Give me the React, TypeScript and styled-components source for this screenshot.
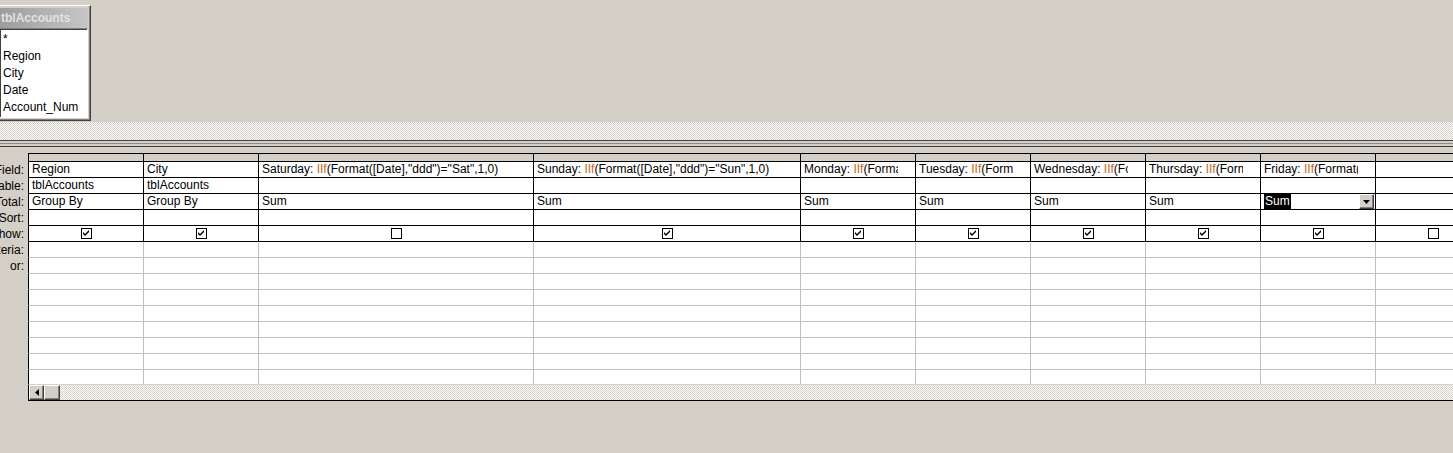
import styled, { createGlobalStyle } from "styled-components";

type Col = {
  w: number;
  field?: string;
  day?: string;
  abbr?: string;
  table?: string;
  total?: string;
  show?: boolean;
  active?: boolean;
};

const cols: Col[] = [
  { w: 115, field: "Region", table: "tblAccounts", total: "Group By", show: true },
  { w: 115, field: "City", table: "tblAccounts", total: "Group By", show: true },
  { w: 275, day: "Saturday", abbr: "Sat", total: "Sum", show: false },
  { w: 267, day: "Sunday", abbr: "Sun", total: "Sum", show: true },
  { w: 115, day: "Monday", abbr: "Mon", total: "Sum", show: true },
  { w: 115, day: "Tuesday", abbr: "Tue", total: "Sum", show: true },
  { w: 115, day: "Wednesday", abbr: "Wed", total: "Sum", show: true },
  { w: 115, day: "Thursday", abbr: "Thu", total: "Sum", show: true },
  { w: 115, day: "Friday", abbr: "Fri", total: "Sum", show: true, active: true },
  { w: 115, show: false },
];

const fields = ["*", "Region", "City", "Date", "Account_Num"];
const extraRows = 7;

const GlobalStyle = createGlobalStyle`
  body {
    margin: 0;
    background: #d4d0c8;
    font-family: "Liberation Sans", Arial, sans-serif;
    font-size: 12px;
    color: #000;
  }
`;

const hatch = `
  background-color: #d4d0c8;
  background-image: conic-gradient(#ffffff 25%, #d4d0c8 0 50%, #ffffff 0 75%, #d4d0c8 0);
  background-size: 2px 2px;
`;

const Page = styled.div`
  width: 1453px;
  height: 453px;
  overflow: hidden;
  display: flex;
  flex-direction: column;
`;

const TopPane = styled.div`
  position: relative;
  height: 122px;
  flex: none;
`;

const TableBox = styled.div`
  position: absolute;
  left: -4px;
  top: 5px;
  width: 95px;
  height: 116px;
  box-sizing: border-box;
  border: 1px solid;
  border-color: #ffffff #404040 #404040 #ffffff;
  box-shadow: inset -1px -1px #808080;
  padding: 2px;
  display: flex;
  flex-direction: column;
  background: #d4d0c8;
`;

const TitleBar = styled.div`
  height: 20px;
  flex: none;
  background: linear-gradient(to right, #9c9c9c, #c6c6c6);
  color: #e2e2e2;
  font-weight: bold;
  font-size: 12px;
  line-height: 20px;
  padding-left: 2px;
  white-space: nowrap;
  overflow: hidden;
`;

const FieldList = styled.div`
  flex: 1;
  background: #ffffff;
  border: 1px solid;
  border-color: #808080 #ffffff #ffffff #808080;
  box-shadow: inset 1px 1px #404040;
  padding: 2px 0 0 3px;
`;

const FieldItem = styled.div`
  line-height: 17px;
  height: 17px;
  white-space: nowrap;
`;

const PaneScroll = styled.div`
  height: 18px;
  flex: none;
  ${hatch}
`;

const Splitter = styled.div`
  height: 13px;
  flex: none;
  border-top: 1px solid #404040;
  box-sizing: border-box;
  padding-top: 2px;
`;

const SplitBar = styled.div`
  height: 2px;
  border-top: 1px solid #8a8a8a;
  border-bottom: 1px solid #404040;
`;

const Grid = styled.div`
  display: flex;
  flex-direction: column;
`;

const Row = styled.div<{ $h: number }>`
  display: flex;
  flex: none;
  height: ${(p) => p.$h}px;
`;

const Label = styled.div`
  width: 28px;
  flex: none;
  display: flex;
  justify-content: flex-end;
  align-items: center;
  overflow: hidden;
  padding-right: 4px;
  box-sizing: border-box;
  white-space: nowrap;
`;

const Cells = styled.div<{ $line: string; $top?: boolean }>`
  display: flex;
  flex: none;
  box-sizing: border-box;
  border-left: 1px solid #000;
  border-top: ${(p) => (p.$top ? "1px solid #000" : "none")};
  border-bottom: 1px solid ${(p) => p.$line};
`;

const Cell = styled.div<{ $w: number; $line: string; $bg?: string }>`
  width: ${(p) => p.$w}px;
  flex: none;
  box-sizing: border-box;
  border-right: 1px solid ${(p) => p.$line};
  background: ${(p) => p.$bg || "#ffffff"};
  display: flex;
  align-items: center;
  overflow: hidden;
`;

const CellText = styled.div`
  flex: 1;
  min-width: 0;
  overflow: hidden;
  white-space: nowrap;
  line-height: 15px;
  padding-left: 3px;
  margin-right: 17px;
`;

const Fn = styled.span`
  color: #c4661c;
`;

const Selected = styled.span`
  background: #000;
  color: #fff;
  padding: 0 1px;
  display: inline-block;
  line-height: 15px;
`;

const DropButton = styled.div`
  width: 15px;
  height: 15px;
  flex: none;
  box-sizing: border-box;
  background: #d4d0c8;
  border: 1px solid;
  border-color: #ffffff #404040 #404040 #ffffff;
  box-shadow: inset -1px -1px #808080;
  display: flex;
  align-items: center;
  justify-content: center;
  margin-left: -16px;
  margin-right: 1px;
`;

const CheckBox = styled.div`
  width: 11px;
  height: 11px;
  box-sizing: border-box;
  border: 1px solid #000;
  background: #fff;
  margin: 0 auto;
  display: flex;
  align-items: center;
  justify-content: center;
`;

const ScrollRow = styled.div`
  display: flex;
  flex: none;
  height: 16px;
  margin-left: 28px;
  border-left: 1px solid #000;
  border-bottom: 1px solid #000;
  box-sizing: border-box;
  ${hatch}
`;

const ScrollButton = styled.div`
  width: 15px;
  height: 15px;
  box-sizing: border-box;
  background: #d4d0c8;
  border: 1px solid;
  border-color: #ffffff #404040 #404040 #ffffff;
  box-shadow: inset -1px -1px #808080;
  display: flex;
  align-items: center;
  justify-content: center;
`;

const Thumb = styled(ScrollButton)`
  width: 16px;
`;

function Check() {
  return (
    <svg width="9" height="9" viewBox="0 0 9 9">
      <path d="M1 3 L3 5 L7 1 V3 L3 7 L1 5 Z" fill="#000" />
    </svg>
  );
}

function fieldText(c: Col) {
  if (c.field) return c.field;
  if (c.day)
    return (
      <>
        {c.day}: <Fn>IIf</Fn>(Format([Date],"ddd")="{c.abbr}",1,0)
      </>
    );
  return null;
}

export default function App() {
  const black = "#000000";
  const gray = "#c0c0c0";

  return (
    <Page>
      <GlobalStyle />
      <TopPane>
        <TableBox>
          <TitleBar>tblAccounts</TitleBar>
          <FieldList>
            {fields.map((f) => (
              <FieldItem key={f}>{f}</FieldItem>
            ))}
          </FieldList>
        </TableBox>
      </TopPane>
      <PaneScroll />
      <Splitter>
        <SplitBar />
      </Splitter>

      <Grid>
        <Row $h={9}>
          <Label />
          <Cells $line={black} $top>
            {cols.map((c, i) => (
              <Cell key={i} $w={c.w} $line={black} $bg="#d4d0c8" />
            ))}
          </Cells>
        </Row>

        <Row $h={16}>
          <Label>Field:</Label>
          <Cells $line={black}>
            {cols.map((c, i) => (
              <Cell key={i} $w={c.w} $line={black}>
                <CellText>{fieldText(c)}</CellText>
              </Cell>
            ))}
          </Cells>
        </Row>

        <Row $h={16}>
          <Label>Table:</Label>
          <Cells $line={black}>
            {cols.map((c, i) => (
              <Cell key={i} $w={c.w} $line={black}>
                <CellText>{c.table}</CellText>
              </Cell>
            ))}
          </Cells>
        </Row>

        <Row $h={16}>
          <Label>Total:</Label>
          <Cells $line={black}>
            {cols.map((c, i) => (
              <Cell key={i} $w={c.w} $line={black}>
                <CellText>{c.active ? <Selected>{c.total}</Selected> : c.total}</CellText>
                {c.active && (
                  <DropButton>
                    <svg width="7" height="4" viewBox="0 0 7 4">
                      <path d="M0 0 H7 L3.5 4 Z" fill="#000" />
                    </svg>
                  </DropButton>
                )}
              </Cell>
            ))}
          </Cells>
        </Row>

        <Row $h={16}>
          <Label>Sort:</Label>
          <Cells $line={black}>
            {cols.map((c, i) => (
              <Cell key={i} $w={c.w} $line={black} />
            ))}
          </Cells>
        </Row>

        <Row $h={16}>
          <Label>Show:</Label>
          <Cells $line={black}>
            {cols.map((c, i) => (
              <Cell key={i} $w={c.w} $line={black}>
                <CheckBox>{c.show && <Check />}</CheckBox>
              </Cell>
            ))}
          </Cells>
        </Row>

        {["Criteria:", "or:"].concat(Array(extraRows).fill("")).map((l, r) => {
          const last = r === extraRows + 1;
          return (
            <Row key={r} $h={last ? 15 : 16}>
              <Label>{l}</Label>
              <Cells $line={last ? "transparent" : gray}>
                {cols.map((c, i) => (
                  <Cell key={i} $w={c.w} $line={gray} />
                ))}
              </Cells>
            </Row>
          );
        })}

        <ScrollRow>
          <ScrollButton>
            <svg width="4" height="7" viewBox="0 0 4 7">
              <path d="M4 0 V7 L0 3.5 Z" fill="#000" />
            </svg>
          </ScrollButton>
          <Thumb />
        </ScrollRow>
      </Grid>
    </Page>
  );
}
